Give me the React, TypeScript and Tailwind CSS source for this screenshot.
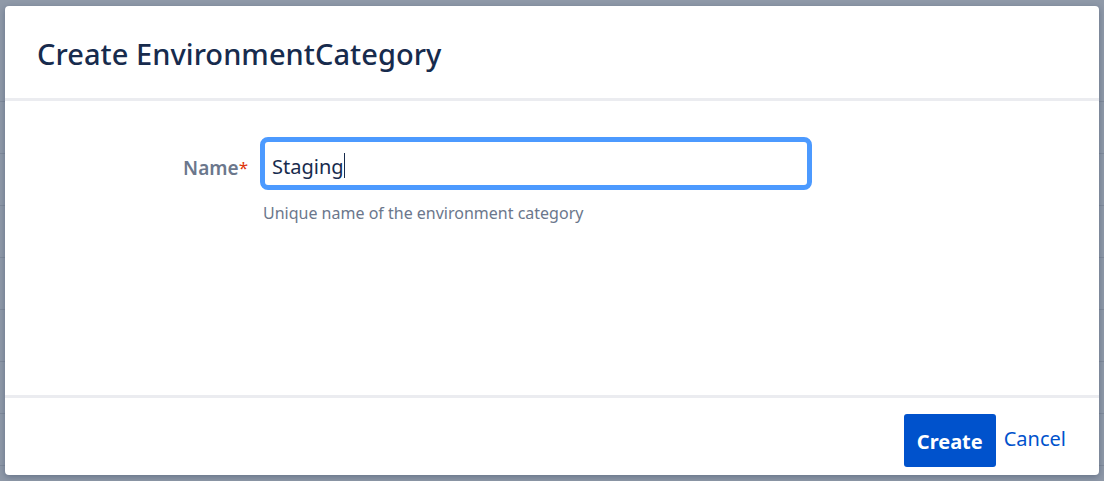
const FONT = { fontFamily: '"Noto Sans", "Open Sans", Arial, sans-serif' }

const BACKDROP_ROWS = [0, 1, 2, 3, 4, 5, 6, 7, 8]

function Backdrop() {
  return (
    <div className="flex flex-col pt-[50px]">
      {BACKDROP_ROWS.map((i) => (
        <div key={i} className="h-[52px] border-b border-[#818b9b]" />
      ))}
    </div>
  )
}

function CreateDialog() {
  return (
    <div
      className="absolute left-[5px] top-[6px] w-[1094px] h-[469px] bg-white rounded-[4px] shadow-[0_2px_6px_rgba(9,30,66,0.3)] flex flex-col overflow-hidden"
      style={FONT}
    >
      <div className="h-[95px] shrink-0 px-[32px] flex items-center border-b-[3px] border-[#ebecf0]">
        <h2 className="text-[29px] font-medium text-[#172b4d] leading-none pt-[2px] tracking-[0.05px]">
          Create EnvironmentCategory
        </h2>
      </div>

      <div className="flex-1 pt-[36px]">
        <div className="flex items-start">
          <label className="w-[243px] shrink-0 text-right text-[19px] font-semibold text-[#6b778c] pt-[18px] leading-[26px]">
            Name<span className="text-[#de350b] font-normal align-top text-[17px]">*</span>
          </label>
          <div className="ml-[12px] flex flex-col">
            <div className="w-[552px] h-[53px] border-[5px] border-[#4c9aff] rounded-[8px] flex items-center pl-[7px] pt-[6px]">
              <span className="text-[20px] text-[#172b4d] leading-none">Staging</span>
              <span className="w-[1px] h-[25px] bg-[#172b4d] -mt-[2px]" />
            </div>
            <div className="mt-[12px] ml-[3px] text-[16px] text-[#6b778c] leading-[22px]">
              Unique name of the environment category
            </div>
          </div>
        </div>
      </div>

      <div className="h-[80px] shrink-0 border-t-[3px] border-[#ebecf0] flex items-start justify-end pt-[16px] pr-[33px] gap-[8px]">
        <button
          type="button"
          className="h-[53px] px-[13px] bg-[#0052cc] rounded-[3px] text-white text-[20px] font-bold pt-[2px]"
        >
          Create
        </button>
        <button type="button" className="h-[50px] text-[20px] text-[#0052cc]">
          Cancel
        </button>
      </div>
    </div>
  )
}

export default function App() {
  return (
    <div className="relative w-[1104px] h-[481px] bg-[#8f99a8] overflow-hidden">
      <Backdrop />
      <CreateDialog />
    </div>
  )
}
